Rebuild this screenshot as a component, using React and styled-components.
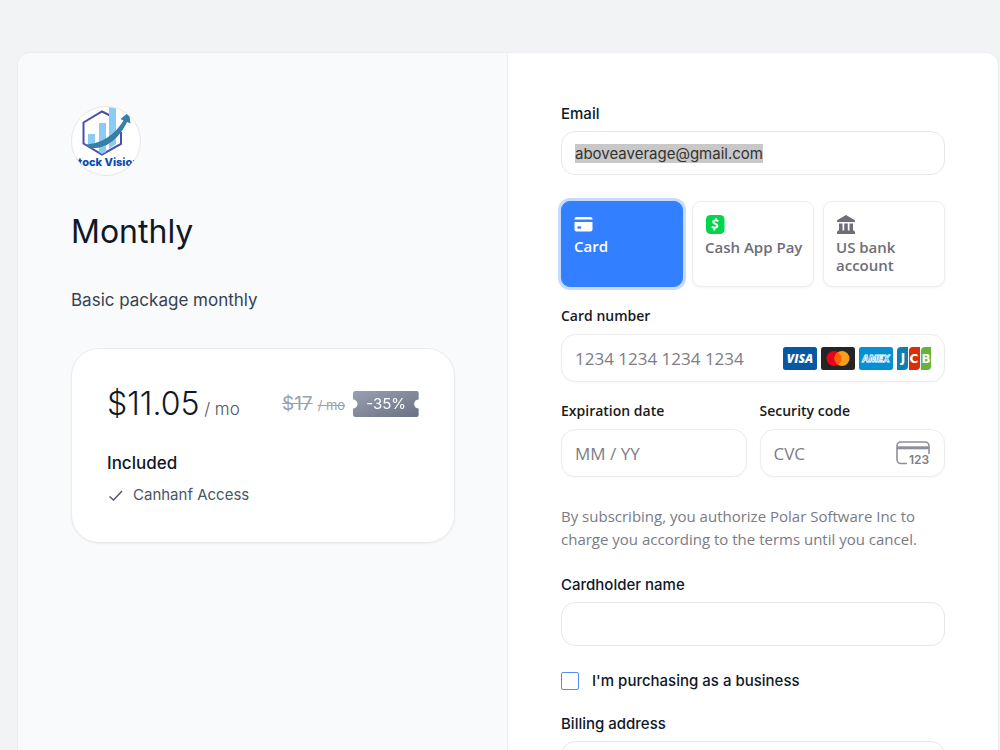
import { useEffect, useRef, useState } from 'react';
import styled, { createGlobalStyle } from 'styled-components';

const sans = "Inter, 'Liberation Sans', sans-serif";
const stripeSans = "'Open Sans', 'Noto Sans', sans-serif";

const GlobalStyle = createGlobalStyle`
  * {
    box-sizing: border-box;
  }

  body {
    margin: 0;
    background: #f2f3f5;
    color: #101828;
    font-family: ${sans};
  }
`;

const Page = styled.main`
  padding: 53px 2px 53px 18px;
`;

const Checkout = styled.div`
  display: grid;
  grid-template-columns: repeat(2, minmax(0, 1fr));
  background: #fff;
  border-radius: 12px;
  box-shadow: 0 0 2px rgba(16, 24, 40, 0.1);
  overflow: hidden;
`;

const Summary = styled.section`
  display: flex;
  flex-direction: column;
  gap: 35px;
  padding: 53px;
  background: #f9fafc;
  box-shadow: inset -1px 0 #edeff2;
`;

const Logo = styled.svg`
  width: 70px;
  height: 70px;
`;

const Title = styled.h1`
  margin: 0;
  font-size: 32px;
  font-weight: 400;
  line-height: 42px;
`;

const Description = styled.p`
  margin: 0;
  color: #364153;
  font-size: 17px;
  line-height: 25px;
`;

const PriceCard = styled.div`
  padding: 35px;
  background: #fff;
  border: 1px solid #e9ebef;
  border-radius: 28px;
  box-shadow: 0 1px 2px rgba(16, 24, 40, 0.05);
`;

const PriceRow = styled.div`
  display: flex;
  align-items: center;
  justify-content: space-between;
  height: 40px;
  margin-bottom: 27px;
  white-space: nowrap;
`;

const Price = styled.div`
  padding-top: 4px;
  font-size: 32px;
  font-weight: 300;
  line-height: 40px;
`;

const Interval = styled.span`
  color: #4a5565;
  font-size: 17px;
`;

const Discount = styled.div`
  display: flex;
  align-items: center;
  gap: 8px;
`;

const OldPrice = styled.div`
  display: flex;
  align-items: baseline;
  gap: 5px;
  color: #99a1af;
  font-size: 19px;
  line-height: 26px;
`;

const OldInterval = styled.s`
  font-size: 13px;
`;

const Ticket = styled.span`
  padding: 0 13px;
  color: #fff;
  background: linear-gradient(160deg, #99a0af, #6a7184);
  border-radius: 2px;
  font-size: 15px;
  line-height: 26px;
  mask: radial-gradient(circle at left center, transparent 4px, #000 5px) left /
      51% 100% no-repeat,
    radial-gradient(circle at right center, transparent 4px, #000 5px) right /
      51% 100% no-repeat;
`;

const IncludedTitle = styled.h2`
  margin: 0 0 8px;
  font-size: 17px;
  font-weight: 500;
  line-height: 24px;
`;

const Benefits = styled.ul`
  margin: 0;
  padding: 0;
  list-style: none;
`;

const Benefit = styled.li`
  display: flex;
  align-items: center;
  gap: 9px;
  color: #4a5565;
  font-size: 15px;
  line-height: 24px;
`;

const Form = styled.form`
  display: flex;
  flex-direction: column;
  gap: 26px;
  padding: 53px;
`;

const Field = styled.div`
  display: flex;
  flex-direction: column;
  gap: 10px;
`;

const Label = styled.label`
  font-size: 15px;
  font-weight: 500;
  line-height: 15px;
`;

const Input = styled.input`
  width: 100%;
  height: 44px;
  padding: 0 13px;
  color: #333;
  background: #fff;
  border: 1px solid #e6e7ea;
  border-radius: 14px;
  outline: none;
  font-family: ${sans};
  font-size: 15px;

  &::selection {
    color: #333;
    background: #c8c8c8;
  }
`;

const Select = styled(Input).attrs({ as: 'select' })`
  appearance: none;
`;

const Payment = styled.div`
  display: flex;
  flex-direction: column;
  gap: 18px;
  font-family: ${stripeSans};
`;

const Methods = styled.div`
  display: grid;
  grid-template-columns: repeat(3, minmax(0, 1fr));
  gap: 9px;
`;

const Method = styled.button`
  display: flex;
  flex-direction: column;
  align-items: flex-start;
  gap: 4px;
  height: 86px;
  padding: 13px 8px 13px 12px;
  color: ${(props) => (props.$active ? '#fff' : '#6d6e78')};
  background: ${(props) => (props.$active ? '#327fff' : '#fff')};
  border: 1px solid ${(props) => (props.$active ? '#327fff' : '#ededf0')};
  border-radius: 9px;
  box-shadow: ${(props) =>
    props.$active ? '0 0 0 3px #c6dcff' : '0 1px 3px rgba(0, 0, 0, 0.05)'};
  font-family: inherit;
  font-size: 15px;
  font-weight: 600;
  line-height: 18px;
  text-align: left;

  svg {
    flex: none;
  }
`;

const StripeField = styled.div`
  display: flex;
  flex-direction: column;
  gap: 7px;
`;

const StripeLabel = styled.label`
  color: #1a1a1a;
  font-size: 14px;
  font-weight: 600;
  line-height: 22px;
`;

const StripeBox = styled.div`
  display: flex;
  align-items: center;
  gap: 4px;
  height: 48px;
  padding: 0 13px;
  background: #fff;
  border: 1px solid #ececef;
  border-radius: 14px;
  box-shadow: 0 1px 2px rgba(0, 0, 0, 0.03);
`;

const StripeInput = styled.input`
  flex: 1;
  min-width: 0;
  padding: 0;
  color: #30313d;
  background: none;
  border: 0;
  outline: none;
  font-family: inherit;
  font-size: 17px;

  &::placeholder {
    color: #7c7d87;
  }
`;

const Columns = styled.div`
  display: grid;
  grid-template-columns: repeat(2, minmax(0, 1fr));
  gap: 13px;
`;

const Terms = styled.p`
  margin: 10px 0 0;
  color: #7a7b85;
  font-size: 15px;
  line-height: 23px;
`;

const CheckRow = styled.label`
  display: flex;
  align-items: center;
  gap: 13px;
  font-size: 15px;
  font-weight: 500;
  line-height: 18px;
`;

const Checkbox = styled.input`
  appearance: none;
  width: 18px;
  height: 18px;
  margin: 0;
  background: #fff;
  border: 1px solid #4f8dfb;
  border-radius: 2px;

  &:checked {
    background: #327fff;
  }
`;

function StockVisionLogo() {
  return (
    <Logo viewBox="0 0 70 70" role="img" aria-label="Stock Vision">
      <defs>
        <clipPath id="logo-clip">
          <circle cx="35" cy="35" r="34" />
        </clipPath>
      </defs>
      <circle cx="35" cy="35" r="34.5" fill="#fff" stroke="#e3e6ea" />
      <g clipPath="url(#logo-clip)">
        <path
          d="M39 9.500 31 5.500 12.500 16.500v21L31 48.500l19-10.500V26"
          fill="none"
          stroke="#4a4fa8"
          strokeWidth="2"
        />
        <path d="M17 28h7v14l-7-4z" fill="#8bcdf2" />
        <path d="M28 17h7v29l-4 2-3-2z" fill="#8bcdf2" />
        <path d="M38 0h7v38l-7 5z" fill="#8bcdf2" />
        <path
          d="M14 38.500C32 38 45 27 52.500 14.500L49.500 13 58 6l1.500 11.500-3.500-1.500C49 31 35 45 18 41.500z"
          fill="#387fa8"
        />
        <text
          x="34"
          y="60"
          fill="#0a4bb0"
          fontFamily="Inter, sans-serif"
          fontSize="11"
          fontWeight="800"
          textAnchor="middle"
        >
          Stock Vision
        </text>
      </g>
    </Logo>
  );
}

function CheckIcon() {
  return (
    <svg width="17" height="17" viewBox="0 0 17 17" fill="none" stroke="currentColor" strokeWidth="1.400">
      <path d="M2.500 9.500 6.500 13 15 4" />
    </svg>
  );
}

function CardIcon() {
  return (
    <svg width="20" height="18" viewBox="0 0 20 18" fill="currentColor">
      <path d="M2.500 2h14A2 2 0 0 1 18.500 4v.500H.500V4a2 2 0 0 1 2-2z" />
      <path
        fillRule="evenodd"
        d="M.500 7h18v7.500a2 2 0 0 1-2 2h-14a2 2 0 0 1-2-2zM4.500 11.300a1 1 0 0 0 0 2.400h1.500a1 1 0 0 0 0-2.400z"
      />
    </svg>
  );
}

function CashAppIcon() {
  return (
    <svg width="20" height="19" viewBox="0 0 20 19" fill="none">
      <rect x="1" width="18.500" height="19" rx="4.500" fill="#00d54b" />
      <path
        d="M13.300 6.300c-1.300-1.200-5-1.500-5.200.7-.2 2.200 4.600 1.400 4.300 3.900-.3 2.400-4 2.300-5.500.6M11.300 3.200l-.5 2M9.500 13.300l-.4 2.200"
        stroke="#fff"
        strokeWidth="1.900"
      />
    </svg>
  );
}

function BankIcon() {
  return (
    <svg width="20" height="19" viewBox="0 0 20 19" fill="currentColor">
      <path d="M10 0 18.500 5q.5.400.5 1v1H1V6q0-.6.500-1zM3 8.500h3.500V16H3zM8.200 8.500h3.600V16H8.200zM13.500 8.500H17V16h-3.500zM2 15.500h16l1 1.500v2H1v-2z" />
    </svg>
  );
}

function VisaIcon() {
  return (
    <svg width="34" height="23" viewBox="0 0 34 23">
      <rect width="34" height="23" rx="2.500" fill="#0857a3" />
      <text
        x="17"
        y="16"
        fill="#fff"
        fontFamily="'Open Sans', sans-serif"
        fontSize="12"
        fontStyle="italic"
        fontWeight="800"
        textAnchor="middle"
      >
        VISA
      </text>
    </svg>
  );
}

function MastercardIcon() {
  return (
    <svg width="34" height="23" viewBox="0 0 34 23">
      <rect width="34" height="23" rx="2.500" fill="#252525" />
      <circle cx="13" cy="11.500" r="7.500" fill="#eb001b" />
      <circle cx="21" cy="11.500" r="7.500" fill="#f79e1b" />
      <path d="M17 5.200a7.500 7.500 0 0 1 0 12.600 7.500 7.500 0 0 1 0-12.600z" fill="#ff5f00" />
    </svg>
  );
}

function AmexIcon() {
  return (
    <svg width="34" height="23" viewBox="0 0 34 23">
      <rect width="34" height="23" rx="2.500" fill="#0690d4" />
      <text
        x="17"
        y="15"
        fill="#0690d4"
        stroke="#fff"
        strokeWidth="0.800"
        fontFamily="Inter, sans-serif"
        fontSize="9"
        fontStyle="italic"
        fontWeight="800"
        textAnchor="middle"
      >
        AMEX
      </text>
    </svg>
  );
}

function JcbIcon() {
  return (
    <svg width="34" height="23" viewBox="0 0 34 23">
      <path d="M4 0h7v19a4 4 0 0 1-4 4H0V4a4 4 0 0 1 4-4z" fill="#0e7fae" />
      <path d="M16 0h7v19a4 4 0 0 1-4 4h-7V4a4 4 0 0 1 4-4z" fill="#d82f09" />
      <path d="M28 0h6v19a4 4 0 0 1-4 4h-6V4a4 4 0 0 1 4-4z" fill="#66b23a" />
      <g
        fill="#fff"
        fontFamily="'DejaVu Sans', sans-serif"
        fontSize="12"
        fontWeight="700"
        textAnchor="middle"
      >
        <text x="6" y="15">J</text>
        <text x="17" y="16">C</text>
        <text x="29" y="16">B</text>
      </g>
    </svg>
  );
}

function CvcIcon() {
  return (
    <svg width="36" height="28" viewBox="0 0 36 28" fill="none">
      <path
        d="M12 24.500H6a4 4 0 0 1-4-4V7a4 4 0 0 1 4-4h24a4 4 0 0 1 4 4v8"
        stroke="#8e8f99"
        strokeWidth="1.600"
      />
      <path d="M2 8.800h32" stroke="#8e8f99" strokeWidth="3" />
      <text
        x="14"
        y="25"
        fill="#7c7d87"
        fontFamily="Inter, sans-serif"
        fontSize="12"
        fontWeight="600"
      >
        123
      </text>
    </svg>
  );
}

const methods = [
  { id: 'card', label: 'Card', Icon: CardIcon },
  { id: 'cashapp', label: 'Cash App Pay', Icon: CashAppIcon },
  { id: 'bank', label: 'US bank account', Icon: BankIcon },
];

export default function App() {
  const [email, setEmail] = useState('aboveaverage@gmail.com');
  const [method, setMethod] = useState('card');
  const emailRef = useRef(null);

  useEffect(() => {
    emailRef.current.focus();
    emailRef.current.select();
  }, []);

  return (
    <>
      <GlobalStyle />
      <Page>
        <Checkout>
          <Summary>
            <StockVisionLogo />
            <Title>Monthly</Title>
            <Description>Basic package monthly</Description>
            <PriceCard>
              <PriceRow>
                <Price>
                  $11.05<Interval> / mo</Interval>
                </Price>
                <Discount>
                  <OldPrice>
                    <s>$17</s>
                    <OldInterval>/ mo</OldInterval>
                  </OldPrice>
                  <Ticket>-35%</Ticket>
                </Discount>
              </PriceRow>
              <IncludedTitle>Included</IncludedTitle>
              <Benefits>
                <Benefit>
                  <CheckIcon />
                  Canhanf Access
                </Benefit>
              </Benefits>
            </PriceCard>
          </Summary>

          <Form onSubmit={(e) => e.preventDefault()}>
            <Field>
              <Label htmlFor="email">Email</Label>
              <Input
                id="email"
                type="text"
                ref={emailRef}
                value={email}
                onChange={(e) => setEmail(e.target.value)}
              />
            </Field>

            <Payment>
              <Methods>
                {methods.map(({ id, label, Icon }) => (
                  <Method
                    key={id}
                    type="button"
                    $active={method === id}
                    aria-pressed={method === id}
                    onClick={() => setMethod(id)}
                  >
                    <Icon />
                    {label}
                  </Method>
                ))}
              </Methods>
              <StripeField>
                <StripeLabel htmlFor="number">Card number</StripeLabel>
                <StripeBox>
                  <StripeInput id="number" placeholder="1234 1234 1234 1234" />
                  <VisaIcon />
                  <MastercardIcon />
                  <AmexIcon />
                  <JcbIcon />
                </StripeBox>
              </StripeField>
              <Columns>
                <StripeField>
                  <StripeLabel htmlFor="expiry">Expiration date</StripeLabel>
                  <StripeBox>
                    <StripeInput id="expiry" placeholder="MM / YY" />
                  </StripeBox>
                </StripeField>
                <StripeField>
                  <StripeLabel htmlFor="cvc">Security code</StripeLabel>
                  <StripeBox>
                    <StripeInput id="cvc" placeholder="CVC" />
                    <CvcIcon />
                  </StripeBox>
                </StripeField>
              </Columns>
              <Terms>
                By subscribing, you authorize Polar Software Inc to charge you
                according to the terms until you cancel.
              </Terms>
            </Payment>

            <Field>
              <Label htmlFor="cardholder">Cardholder name</Label>
              <Input id="cardholder" type="text" />
            </Field>

            <CheckRow>
              <Checkbox type="checkbox" />
              I'm purchasing as a business
            </CheckRow>

            <Field>
              <Label htmlFor="country">Billing address</Label>
              <Select id="country" />
            </Field>
          </Form>
        </Checkout>
      </Page>
    </>
  );
}
